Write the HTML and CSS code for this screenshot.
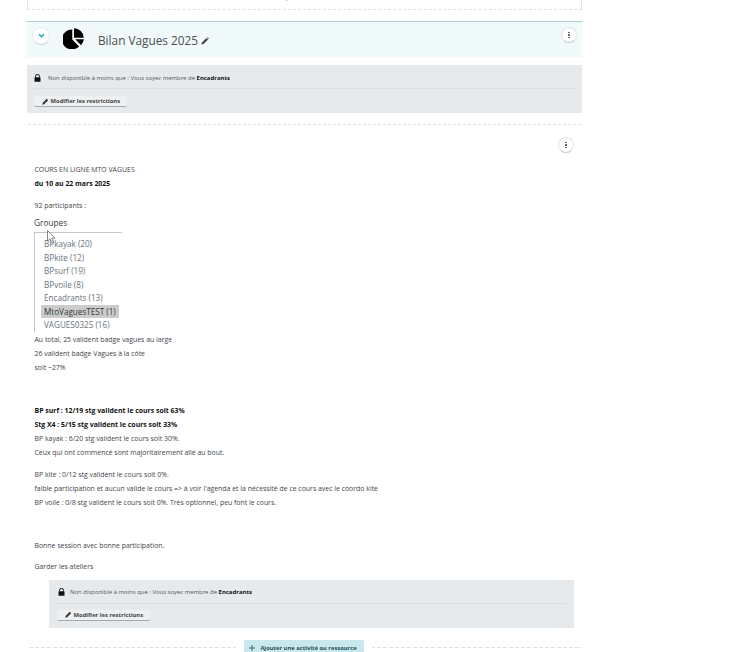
FILE: index.html
```html
<!DOCTYPE html>
<html lang="fr">

<head>
    <meta charset="UTF-8">
    <title>Bilan Vagues 2025</title>
    <link rel="stylesheet" href="styles.css">
</head>

<body>
    <div class="course">
        <div class="prev-section"><div class="prev-add"></div></div>

        <div class="section-head">
            <button class="round-btn toggle">
                <svg width="7" height="5" viewBox="0 0 8 6"><path d="M1 1.5 L4 4.5 L7 1.5" fill="none" stroke="#0f9fc4" stroke-width="1.5"/></svg>
            </button>
            <svg class="pie" width="21" height="21" viewBox="0 0 22 22">
                <path d="M9.7 1.5 V12 L16.9 19.3 A10.5 10.5 0 1 1 9.7 1.5 Z" fill="#000"/>
                <path d="M11.5 0.2 A10.5 10.5 0 0 1 21.8 10.2 H11.5 Z" fill="#000"/>
                <path d="M12.8 11.8 H21.8 A10.5 10.5 0 0 1 18.9 18 Z" fill="#000"/>
            </svg>
            <span class="section-title">Bilan Vagues 2025</span>
            <svg class="pen-big" width="8" height="8" viewBox="0 0 10 10"><path d="M0.5 9.5 L1.2 6.8 L6.8 1.2 L8.8 3.2 L3.2 8.8 Z M7.5 0.5 L8 0 L10 2 L9.5 2.5 Z" fill="#444"/></svg>
            <button class="round-btn kebab"><i></i><i></i><i></i></button>
        </div>

        <div class="restriction">
            <div class="restriction-text">
                <svg width="7" height="8" viewBox="0 0 7 8"><path d="M1.5 3.5 V2.4 A2 2 0 0 1 5.5 2.4 V3.5" fill="none" stroke="#111" stroke-width="1"/><rect x="0.5" y="3.2" width="6" height="4.6" rx="0.6" fill="#111"/></svg>
                <span>Non disponible à moins que : Vous soyez membre de <b>Encadrants</b></span>
            </div>
            <button class="edit-btn">
                <svg width="7" height="7" viewBox="0 0 10 10"><path d="M0.5 9.5 L1.2 6.8 L6.8 1.2 L8.8 3.2 L3.2 8.8 Z" fill="#333"/></svg>
                Modifier les restrictions
            </button>
        </div>

        <div class="section-body">
            <div class="body-tools">
                <button class="round-btn kebab"><i></i><i></i><i></i></button>
            </div>

            <p>COURS EN LIGNE MTO VAGUES</p>
            <p><b>du 10 au 22 mars 2025</b></p>
            <p class="gap-8">92 participants :</p>

            <div class="groups">
                <div class="groups-title">Groupes</div>
                <ul class="groups-list">
                    <li>BPkayak (20)</li>
                    <li>BPkite (12)</li>
                    <li>BPsurf (19)</li>
                    <li>BPvoile (8)</li>
                    <li>Encadrants (13)</li>
                    <li><span class="selected">MtoVaguesTEST (1)</span></li>
                    <li>VAGUES0325 (16)</li>
                </ul>
                <svg class="cursor" width="10" height="15" viewBox="0 0 10 15"><path d="M0.5 0.5 V11 L3 8.8 L5 13 L6.6 12.3 L4.8 8.3 L8 8.2 Z" fill="#fff" stroke="#555" stroke-width="0.7"/></svg>
            </div>

            <p>Au total, 25 valident badge vagues au large</p>
            <p>26 valident badge Vagues à la côte</p>
            <p>soit ~27%</p>

            <p class="gap-29"><b>BP surf : 12/19 stg valident le cours soit 63%</b></p>
            <p><b>Stg X4 : 5/15 stg valident le cours soit 33%</b></p>
            <p>BP kayak : 6/20 stg valident le cours soit 30%.</p>
            <p>Ceux qui ont commencé sont majoritairement allé au bout.</p>

            <p class="gap-8">BP kite : 0/12 stg valident le cours soit 0%.</p>
            <p>faible participation et aucun valide le cours =&gt; à voir l'agenda et la nécessité de ce cours avec le coordo kite</p>
            <p>BP voile : 0/8 stg valident le cours soit 0%. Très optionnel, peu font le cours.</p>

            <p class="gap-29">Bonne session avec bonne participation.</p>
            <p class="gap-7">Garder les ateliers</p>

            <div class="restriction inner">
                <div class="restriction-text">
                    <svg width="7" height="8" viewBox="0 0 7 8"><path d="M1.5 3.5 V2.4 A2 2 0 0 1 5.5 2.4 V3.5" fill="none" stroke="#111" stroke-width="1"/><rect x="0.5" y="3.2" width="6" height="4.6" rx="0.6" fill="#111"/></svg>
                    <span>Non disponible à moins que : Vous soyez membre de <b>Encadrants</b></span>
                </div>
                <button class="edit-btn">
                    <svg width="7" height="7" viewBox="0 0 10 10"><path d="M0.5 9.5 L1.2 6.8 L6.8 1.2 L8.8 3.2 L3.2 8.8 Z" fill="#333"/></svg>
                    Modifier les restrictions
                </button>
            </div>
        </div>

        <div class="add-row">
            <button class="add-btn">
                <svg width="6" height="6" viewBox="0 0 6 6"><path d="M3 0 V6 M0 3 H6" stroke="#1d4f57" stroke-width="0.8"/></svg>
                Ajouter une activité ou ressource
            </button>
        </div>
    </div>
</body>

</html>
```

FILE: styles.css
```css
html,
body {
    height: 652px;
    overflow: hidden;
}

body {
    margin: 0;
    font-family: "Open Sans", sans-serif;
    font-size: 6.92px;
    color: #3f4448;
    background-color: #fff;
}

.course {
    width: 555px;
    margin-left: 27px;
}

.prev-section {
    height: 9px;
    border-bottom: 1px dashed #dee2e6;
    border-left: 1px dashed #dee2e6;
    border-right: 1px dashed #dee2e6;
}

.prev-add {
    width: 3px;
    height: 1px;
    margin-left: 257px;
    background-color: #c9e8ec;
}

.round-btn {
    display: flex;
    align-items: center;
    justify-content: center;
    width: 16px;
    height: 16px;
    padding: 0;
    border: 1px solid #e3e6e8;
    border-bottom-color: #c4c8cc;
    border-radius: 50%;
    background-color: #fff;
}

.kebab {
    flex-direction: column;
    gap: 1px;
}

.kebab i {
    display: block;
    width: 2px;
    height: 1.5px;
    background-color: #666;
}

.section-head {
    display: flex;
    align-items: center;
    height: 35px;
    margin-top: 11px;
    padding: 0 5px;
    background-color: #f0fafa;
    border-top: 1px solid #aecbdc;
}

.toggle {
    width: 18px;
    height: 18px;
    margin-bottom: 8px;
}

.pie {
    margin: 0 0 2px 13px;
}

.section-title {
    margin-left: 14px;
    padding-top: 1px;
    font-size: 11.8px;
    color: #4a4f53;
}

.pen-big {
    margin: 3px 0 0 3px;
}

.section-head .kebab {
    margin: 0 0 9px auto;
}

.restriction {
    height: 48px;
    box-sizing: border-box;
    margin-top: 8px;
    padding: 4px 7px 0;
    background-color: #e7eaed;
}

.restriction-text {
    display: flex;
    align-items: center;
    gap: 7px;
    height: 17px;
    padding-bottom: 2px;
    border-bottom: 1px solid #dde0e3;
    font-size: 5.96px;
    color: #555;
}

.restriction-text b {
    color: #111;
}

.edit-btn {
    display: flex;
    align-items: center;
    gap: 2px;
    height: 11px;
    margin-top: 7px;
    padding: 0 6.5px 0 7.5px;
    border: 0;
    border-bottom: 1px solid #a5a9ad;
    border-radius: 2px;
    background-color: #eef0f2;
    font-family: "Open Sans", sans-serif;
    font-size: 5.85px;
    font-weight: 700;
    color: #444;
}

.section-body {
    margin: 11px 1px 0;
    padding: 0 6.5px;
    border-top: 1px dashed #dee2e6;
}

.body-tools {
    display: flex;
    justify-content: flex-end;
    height: 38px;
    padding: 12px 0.5px 0 0;
    box-sizing: border-box;
}

.section-body p {
    margin: 0;
    line-height: 14px;
    white-space: nowrap;
}

.section-body p b {
    color: #111;
}

.gap-7 {
    padding-top: 7px;
}

.section-body .gap-8 {
    margin-top: 8px;
}

.section-body .gap-29 {
    margin-top: 29px;
}

.groups {
    position: relative;
    margin: 4px 0 0 -0.5px;
}

.groups-title {
    font-size: 8.3px;
    line-height: 12px;
    color: #343a40;
}

.groups-list {
    width: 78px;
    margin: 3px 0 1px;
    padding: 4px 0 0 9px;
    list-style: none;
    border-top: 1px solid #c4c8cc;
    border-left: 1px solid #c4c8cc;
    font-size: 8.15px;
    line-height: 13.5px;
    color: #6a737b;
    white-space: nowrap;
}

.selected {
    display: inline-block;
    margin-left: -3px;
    padding: 0 3px;
    background-color: #ccc;
    color: #343a40;
}

.cursor {
    position: absolute;
    left: 13px;
    top: 13px;
}

.inner {
    width: 525px;
    margin: 6px 0 0 14.5px;
}

.inner .restriction-text {
    padding-left: 2px;
    gap: 5px;
}

.inner .edit-btn {
    margin-top: 6px;
    margin-left: 1px;
}

.add-row {
    display: flex;
    justify-content: center;
    align-items: flex-start;
    height: 12px;
    margin: 12px 0 0 2px;
    background-image: repeating-linear-gradient(90deg, #dee2e6 0 4px, transparent 4px 6px);
    background-position: 0 7px;
    background-size: 100% 1px;
    background-repeat: no-repeat;
}

.add-btn {
    display: flex;
    align-items: flex-start;
    gap: 4px;
    box-sizing: border-box;
    height: 12px;
    padding: 4px 7px 0 5px;
    margin-right: 3px;
    border: 0;
    box-shadow: 0 0 0 8px #fff;
    border-radius: 2px 2px 0 0;
    background-color: #c9e8ec;
    font-family: "Open Sans", sans-serif;
    font-size: 5.8px;
    line-height: 8px;
    font-weight: 700;
    color: #1d4f57;
}

.add-btn svg {
    margin: 1px 1px 0 0;
}
```
